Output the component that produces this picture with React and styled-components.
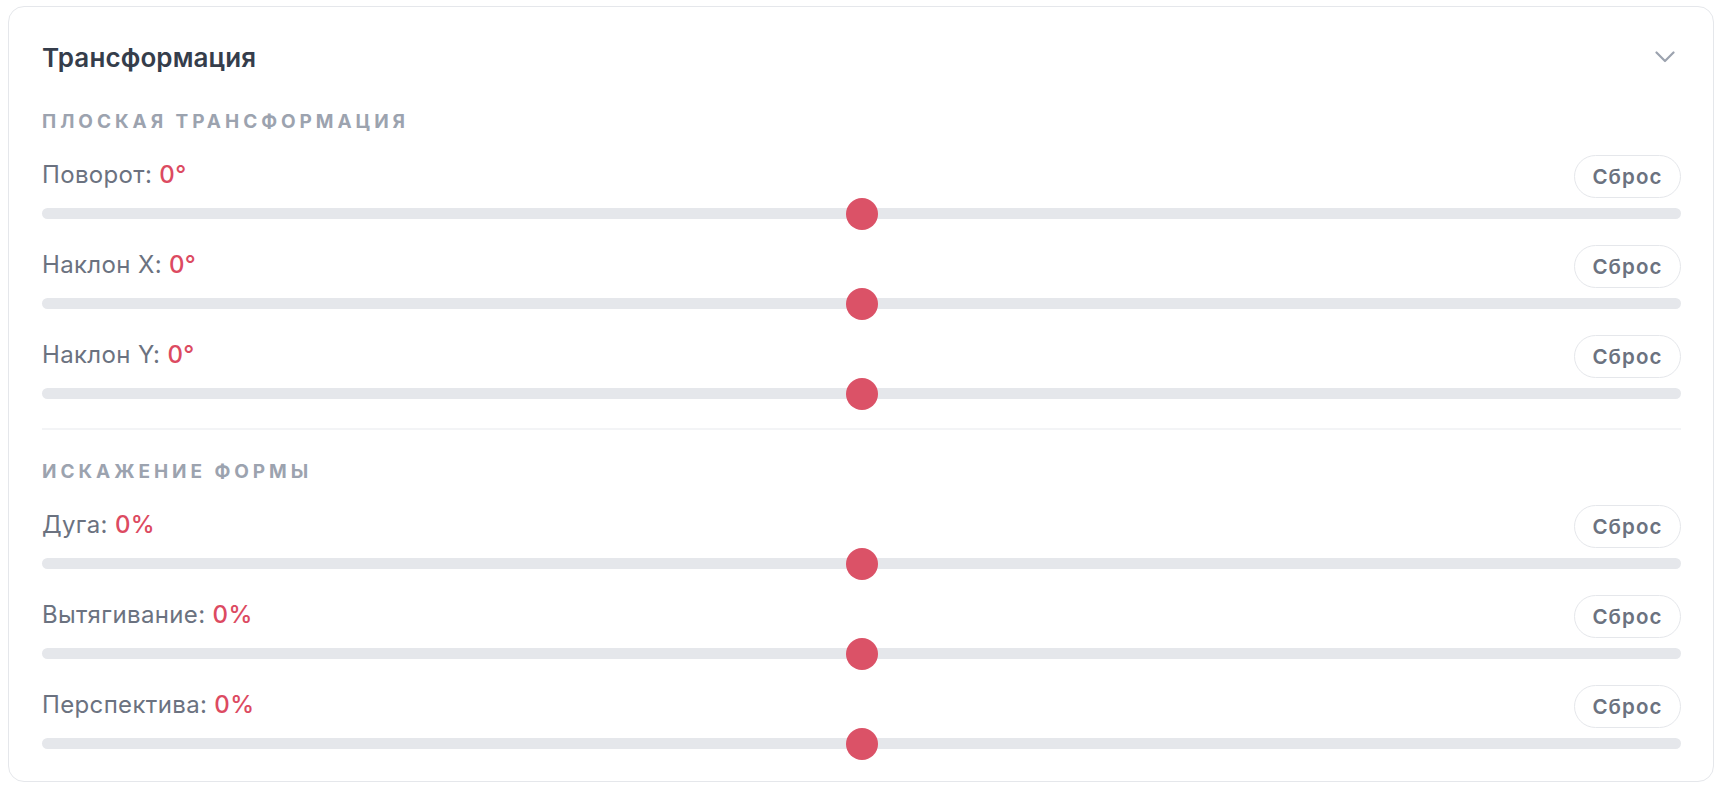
import React from "react";
import styled, { createGlobalStyle } from "styled-components";

const Global = createGlobalStyle`
  html, body { margin: 0; padding: 0; background: #ffffff; }
  body { font-family: Inter, "Noto Sans", sans-serif; -webkit-font-smoothing: antialiased; }
`;

const Page = styled.div`
  padding: 6px 8px 8px 8px;
`;

const Card = styled.section`
  border: 1px solid #e5e7eb;
  border-radius: 16px;
  background: #fff;
  padding: 24px 32px 32px 33px;
  box-sizing: border-box;
`;

const Header = styled.div`
  height: 52px;
  display: flex;
  align-items: center;
  justify-content: space-between;
`;

const Title = styled.h2`
  margin: 0;
  font-size: 26px;
  font-weight: 600;
  color: #353d4b;
  letter-spacing: 0.1px;
`;

const Chevron = styled.svg`
  width: 20px;
  height: 12px;
  margin-right: 6px;
  color: #9ca3af;
`;

const SectionTitle = styled.h3`
  margin: ${(p) => (p.$first ? "27px" : "30px")} 0 21px;
  height: 24px;
  line-height: 24px;
  font-size: 19px;
  font-weight: 700;
  letter-spacing: 3.95px;
  text-transform: uppercase;
  color: #9ca3af;
`;

const Divider = styled.hr`
  border: none;
  height: 2px;
  background: #f3f4f6;
  margin: 29px 0 0;
`;

const Rows = styled.div`
  display: flex;
  flex-direction: column;
  gap: 26px;
`;

const Row = styled.div`
  display: flex;
  flex-direction: column;
  gap: 10px;
`;

const RowTop = styled.div`
  display: flex;
  align-items: center;
  justify-content: space-between;
  height: 43px;
`;

const Label = styled.span`
  font-size: 24px;
  letter-spacing: 0.35px;
  color: #6b7280;
  margin-top: -5px;
`;

const Value = styled.span`
  color: #dc4a61;
  font-weight: 500;
`;

const ResetButton = styled.button`
  height: 43px;
  width: 107px;
  border: 1.5px solid #e5e7eb;
  border-radius: 999px;
  background: #fff;
  font-family: inherit;
  font-size: 20.5px;
  font-weight: 600;
  color: #6b7280;
  letter-spacing: 1.1px;
  cursor: pointer;
  padding: 0;
`;

const Track = styled.div`
  position: relative;
  height: 11px;
  border-radius: 999px;
  background: #e5e7eb;
`;

const Thumb = styled.div`
  position: absolute;
  top: 50%;
  width: 32px;
  height: 32px;
  border-radius: 50%;
  background: #db5267;
  transform: translate(-50%, -50%);
`;

function Slider({ label, value, unit, min, max }) {
  const pct = ((value - min) / (max - min)) * 100;
  return (
    <Row>
      <RowTop>
        <Label>
          {label}: <Value>{value}{unit}</Value>
        </Label>
        <ResetButton>Сброс</ResetButton>
      </RowTop>
      <Track>
        <Thumb style={{ left: `${pct}%` }} />
      </Track>
    </Row>
  );
}

const flat = [
  { label: "Поворот", unit: "°" },
  { label: "Наклон X", unit: "°" },
  { label: "Наклон Y", unit: "°" },
];
const warp = [
  { label: "Дуга", unit: "%" },
  { label: "Вытягивание", unit: "%" },
  { label: "Перспектива", unit: "%" },
];

export default function App() {
  return (
    <Page>
      <Global />
      <Card>
        <Header>
          <Title>Трансформация</Title>
          <Chevron viewBox="0 0 20 12" fill="none">
            <polyline points="1.5,1.5 10,10 18.5,1.5" stroke="currentColor" strokeWidth="2.2" strokeLinecap="round" strokeLinejoin="round" />
          </Chevron>
        </Header>
        <SectionTitle $first>Плоская трансформация</SectionTitle>
        <Rows>
          {flat.map((s) => (
            <Slider key={s.label} label={s.label} value={0} unit={s.unit} min={-100} max={100} />
          ))}
        </Rows>
        <Divider />
        <SectionTitle>Искажение формы</SectionTitle>
        <Rows>
          {warp.map((s) => (
            <Slider key={s.label} label={s.label} value={0} unit={s.unit} min={-100} max={100} />
          ))}
        </Rows>
      </Card>
    </Page>
  );
}
